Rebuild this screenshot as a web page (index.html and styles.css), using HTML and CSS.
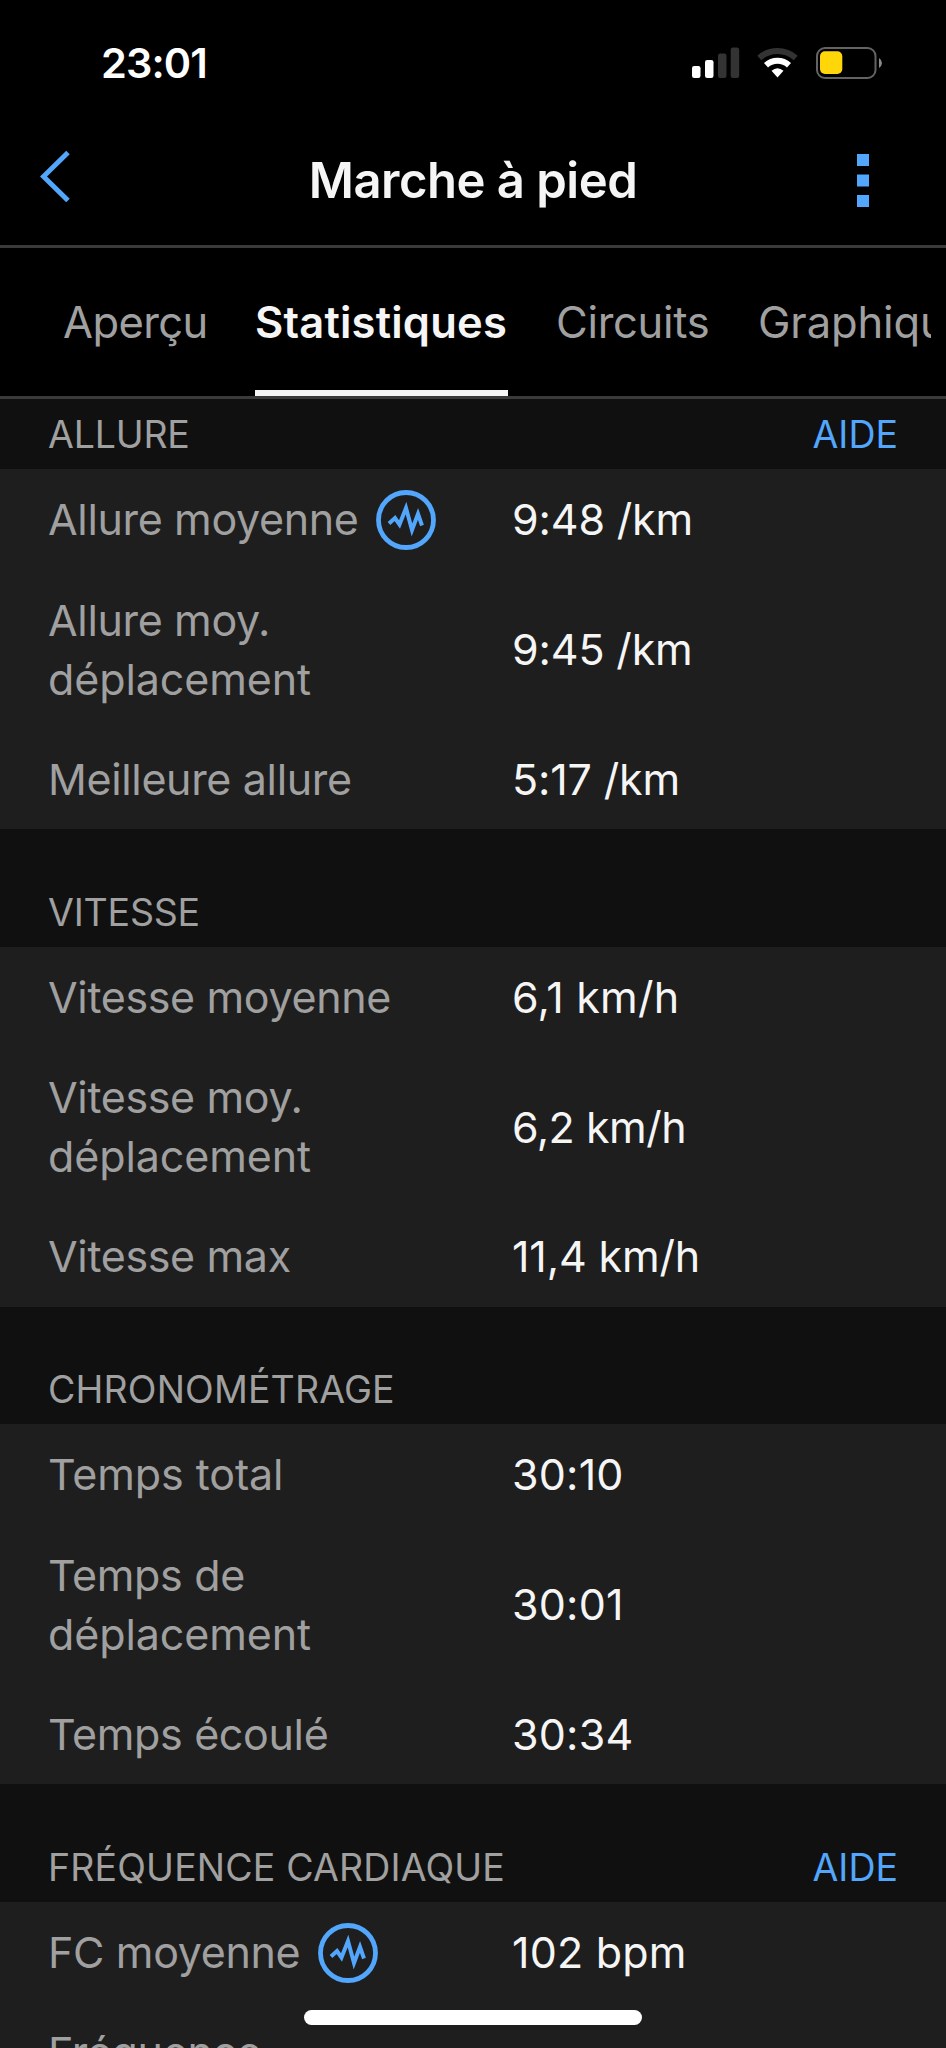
FILE: index.html
```html
<!DOCTYPE html>
<html lang="fr">
<head>
<meta charset="utf-8">
<title>Marche à pied</title>
<link rel="stylesheet" href="styles.css">
</head>
<body>
<div class="screen">
  <div class="status">
    <span class="clock">23:01</span>
    <svg class="status-icons" width="192" height="34" viewBox="0 0 192 34">
      <g fill="#fff"><rect x="1" y="20" width="8.5" height="12" rx="2.2"/><rect x="14" y="14" width="8.5" height="18" rx="2.2"/></g>
      <g fill="#333"><rect x="27" y="7.500" width="8.500" height="24.500" rx="2.200"/><rect x="39.700" y="1.500" width="8.500" height="30.500" rx="2.200"/></g>
      <g fill="none" stroke-width="6">
        <path d="M68.300 11.900A27.500 27.500 0 0 1 104.700 11.900" stroke="#333"/>
        <path d="M75 19.200A17 17 0 0 1 98 19.200" stroke="#fff"/>
      </g>
      <path d="M86.500 31.500L80.500 24.800Q86.500 19.600 92.500 24.800Z" fill="#fff"/>
      <rect x="126" y="2" width="58.500" height="30" rx="8" fill="none" stroke="#636363" stroke-width="2"/>
      <rect x="129" y="5.300" width="22.300" height="22.600" rx="5" fill="#ffd60a"/>
      <path d="M188 12Q191 14 191 17Q191 20 188 22Z" fill="#8a8a8a"/>
    </svg>
  </div>
  <header class="navbar">
    <svg class="back" width="30" height="52" viewBox="0 0 30 52"><path d="M28 2.500L3.500 26.500L28 50.500" fill="none" stroke="#52a6fb" stroke-width="5"/></svg>
    <h1 class="title">Marche à pied</h1>
    <svg class="more" width="12" height="53" viewBox="0 0 12 53" fill="#52a6fb"><path d="M0 0h12v12H0zM0 20.500h12v12H0zM0 41h12v12H0z"/></svg>
  </header>
  <nav class="tabs">
    <span class="tab t1">Aperçu</span>
    <span class="tab t2 active">Statistiques</span>
    <span class="tab t3">Circuits</span>
    <span class="tab t4">Graphiques</span>
  </nav>
  <main>
    <section>
      <div class="head first"><h2 class="short">ALLURE</h2><a class="help">AIDE</a></div>
      <div class="rows">
        <div class="row"><span class="label">Allure moyenne<svg class="pulse" width="60" height="60" viewBox="0 0 60 60"><circle cx="30" cy="30" r="27.500"/><path d="M13 33.500L19 28L23.500 34.500L30 18L36 40L42 24L46 35.500"/></svg></span><span class="value">9:48 /km</span></div>
        <div class="row"><span class="label">Allure moy.<br><span class="wide">déplacement</span></span><span class="value">9:45 /km</span></div>
        <div class="row"><span class="label">Meilleure allure</span><span class="value">5:17 /km</span></div>
      </div>
    </section>
    <section>
      <div class="head"><h2 class="short">VITESSE</h2></div>
      <div class="rows">
        <div class="row"><span class="label">Vitesse moyenne</span><span class="value loose">6,1 km/h</span></div>
        <div class="row"><span class="label">Vitesse moy.<br><span class="wide">déplacement</span></span><span class="value tight">6,2 km/h</span></div>
        <div class="row"><span class="label">Vitesse max</span><span class="value">11,4 km/h</span></div>
      </div>
    </section>
    <section>
      <div class="head"><h2>CHRONOMÉTRAGE</h2></div>
      <div class="rows">
        <div class="row"><span class="label wide">Temps total</span><span class="value loose">30:10</span></div>
        <div class="row"><span class="label">Temps de<br><span class="wide">déplacement</span></span><span class="value loose">30:01</span></div>
        <div class="row"><span class="label">Temps écoulé</span><span class="value loose">30:34</span></div>
      </div>
    </section>
    <section>
      <div class="head"><h2>FRÉQUENCE CARDIAQUE</h2><a class="help">AIDE</a></div>
      <div class="rows">
        <div class="row"><span class="label">FC moyenne<svg class="pulse" width="60" height="60" viewBox="0 0 60 60"><circle cx="30" cy="30" r="27.500"/><path d="M13 33.500L19 28L23.500 34.500L30 18L36 40L42 24L46 35.500"/></svg></span><span class="value loose">102 bpm</span></div>
        <div class="row"><span class="label">Fréquence</span></div>
      </div>
    </section>
  </main>
  <div class="home"></div>
</div>
</body>
</html>
```

FILE: styles.css
```css
* { box-sizing: border-box; }
body { margin: 0; background: #000; }
.screen {
  position: relative;
  width: 946px;
  height: 2048px;
  overflow: hidden;
  background: #000;
  color: #f5f5f5;
  font-family: Inter, "Liberation Sans", sans-serif;
}
h1, h2 { margin: 0; }
.status {
  height: 126px;
  padding: 0 63px 0 101px;
  display: flex;
  justify-content: space-between;
  align-items: center;
}
.clock { color: #fff; font-size: 41.5px; font-weight: 600; letter-spacing: -0.9px; }
.navbar {
  height: 122px;
  padding: 0 77px 11px 40px;
  border-bottom: 3px solid #3a3a3a;
  display: grid;
  grid-template-columns: 30px 1fr 12px;
  align-items: center;
}
.back { margin-top: -8px; }
.title { padding-left: 19px; text-align: center; font-size: 49px; font-weight: 600; letter-spacing: -0.5px; }
.tabs {
  height: 151px;
  width: 946px;
  padding-left: 63px;
  border-bottom: 3px solid #3a3a3a;
  display: flex;
  gap: 48px;
  font-size: 43.5px;
  letter-spacing: -0.3px;
  color: #a0a0a0;
  white-space: nowrap;
}
.tab { flex: none; line-height: 148px; height: 148px; }
.t1 { width: 144px; letter-spacing: -0.6px; }
.t2 { width: 253px; letter-spacing: 0.2px; }
.t3 { width: 154px; }
.t4 { width: 173px; overflow: hidden; letter-spacing: -0.1px; }
.active { color: #f5f5f5; font-weight: 600; border-bottom: 6px solid #f5f5f5; }
.head {
  height: 117.4px;
  padding: 0 48px 14px;
  background: #101010;
  display: flex;
  justify-content: space-between;
  align-items: flex-end;
}
.head.first { height: 70px; }
h2, .help { font-size: 37.5px; font-weight: 400; line-height: 40px; color: #a0a0a0; letter-spacing: 0.15px; }
h2.short { letter-spacing: -0.2px; }
.help { color: #52a6fb; letter-spacing: 0; }
.rows { background: #1e1e1e; }
.row {
  padding: 21.2px 48px 20.2px;
  display: grid;
  grid-template-columns: 464px 1fr;
  align-items: center;
  font-size: 43px;
  line-height: 59px;
}
.label { color: #a0a0a0; display: flex; align-items: center; letter-spacing: -0.35px; }
.label:has(br) { display: block; }
.wide { letter-spacing: -0.1px; }
.value { letter-spacing: -0.15px; }
.value.loose { letter-spacing: 0.2px; }
.value.tight { letter-spacing: -0.5px; }
.pulse { flex: none; margin: 0 0 -1px 17.5px; fill: none; stroke: #52a6fb; stroke-width: 4.8; }
.pulse path { stroke-width: 4; }
.home {
  position: absolute;
  left: 304px;
  bottom: 23.5px;
  width: 338px;
  height: 15px;
  border-radius: 8px;
  background: #fff;
}
```
